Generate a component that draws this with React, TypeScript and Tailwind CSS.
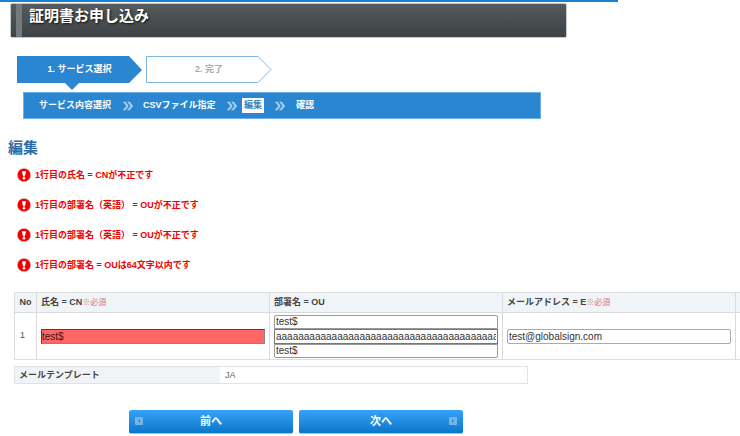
const Err = ({ children }: { children: React.ReactNode }) => (
  <div className="flex h-[30px] items-center gap-[4px] pl-[17px]">
    <svg width="14" height="14" viewBox="0 0 14 14" className="shrink-0">
      <circle cx="7" cy="7" r="6.6" fill="#f00000" />
      <circle cx="7" cy="7" r="6.6" fill="none" stroke="#e8a0a0" strokeWidth="0.6" />
      <path d="M4.9 3.2h4.2L7.9 8.4H6.1z" fill="#fff" />
      <circle cx="7" cy="10.3" r="1.3" fill="#fff" />
    </svg>
    <span className="text-[9px] font-bold leading-none text-[#f00000]">{children}</span>
  </div>
);
const Chevrons = ({ className }: { className: string }) => (
  <svg width="12" height="10" viewBox="0 0 14 10" className={"shrink-0 " + className}>
    <path d="M1 0l4 5-4 5h3l4-5-4-5zM6 0l4 5-4 5h3l4-5-4-5z" fill="#a9cdec" />
  </svg>
);
const Req = () => <span className="text-[8px] font-normal text-[#d9717c]">※必須</span>;
const inputBase = "block text-[10px] leading-none outline-none";
const App = () => (
  <div className="relative h-[436px] w-[740px] overflow-hidden bg-white font-['Liberation_Sans','Noto_Sans_CJK_JP',sans-serif]">
    <div className="h-[2px] w-[618px] bg-[#1a80d2]" />
    <div className="ml-[10px] mt-[1px] flex h-[35px] w-[557px] rounded-[2px] border border-[#c4c8ca] bg-gradient-to-b from-[#555b5e] to-[#3e4244]">
      <div className="ml-[5px] h-full w-[6px] bg-[#737a7e]" />
      <h1 className="ml-[7px] mt-[1px] text-[15px] font-bold leading-[22px] text-white [text-shadow:1px_1px_2px_#111]">証明書お申し込み</h1>
    </div>
    <div className="ml-[17px] mt-[18px] flex h-[27px] gap-[4px]">
      <div className="relative flex h-[27px] w-[125px] items-center justify-center">
        <svg width="125" height="34" viewBox="0 0 125 34" className="absolute left-0 top-0">
          <path d="M0 0H112L125 14 112 27H62L55 34 48 27H0z" fill="#2a86d0" />
        </svg>
        <span className="relative text-[9px] font-bold leading-none text-white">1. サービス選択</span>
      </div>
      <div className="relative flex h-[27px] w-[126px] items-center justify-center">
        <svg width="126" height="27" viewBox="0 0 126 27" className="absolute left-0 top-0">
          <path d="M.5.5H112L125 13.5 112 26.5H.5z" fill="#fff" stroke="#7fb6e6" />
        </svg>
        <span className="relative text-[9px] font-bold leading-none text-[#aaa]">2. 完了</span>
      </div>
    </div>
    <div className="ml-[23px] mt-[9px] flex h-[27px] w-[518px] items-center border border-[#6db0e6] bg-[#2a86d0] pl-[15px] text-[9px] font-bold leading-none text-white">
      <span>サービス内容選択</span>
      <Chevrons className="ml-[11px] mr-[9px]" />
      <span className="w-[73px] whitespace-nowrap">CSVファイル指定</span>
      <Chevrons className="ml-[10px] mr-[4px]" />
      <span className="bg-white px-[2px] py-[3px] text-[#3f7fb8]">編集</span>
      <Chevrons className="ml-[10px] mr-[10px]" />
      <span>確認</span>
    </div>
    <h2 className="ml-[8px] mt-[19px] text-[15px] font-bold leading-[20px] text-[#2d6aa8]">編集</h2>
    <div className="mt-[2px]">
      <Err>1行目の氏名 = CNが不正です</Err>
      <Err>1行目の部署名（英語） = OUが不正です</Err>
      <Err>1行目の部署名（英語） = OUが不正です</Err>
      <Err>1行目の部署名 = OUは64文字以内です</Err>
    </div>
    <div className="ml-[14px] mt-[12px] w-[740px] border-y border-l border-[#dcdfe1]">
      <div className="flex h-[20px] border-b border-[#d8dadc] bg-[#f0f4f7] text-[9px] font-bold leading-none text-[#444]">
        <div className="flex w-[22px] items-center justify-center border-r border-[#d8dadc]">No</div>
        <div className="flex w-[233px] items-center border-r border-[#d8dadc] pl-[4px]">氏名 = CN<Req /></div>
        <div className="flex w-[233px] items-center border-r border-[#d8dadc] pl-[4px]">部署名 = OU</div>
        <div className="flex w-[233px] items-center border-r border-[#d8dadc] pl-[4px]">メールアドレス = E<Req /></div>
      </div>
      <div className="flex h-[46px] text-[9px] text-[#555]">
        <div className="flex w-[22px] items-center border-r border-[#d8dadc] pl-[5px]">1</div>
        <div className="flex w-[233px] items-center border-r border-[#d8dadc] pl-[4px]">
          <input readOnly value="test$" className={inputBase + " h-[15px] w-[224px] border border-[#444] border-b-[#888] border-r-[#888] bg-[#ff6666] text-[#3a1818]"} />
        </div>
        <div className="flex w-[233px] flex-col justify-center border-r border-[#d8dadc] pl-[4px]">
          <input readOnly value="test$" className={inputBase + " h-[14px] w-[224px] rounded-t-[2px] border border-[#999] bg-white px-[1px] text-[#333]"} />
          <input readOnly value="aaaaaaaaaaaaaaaaaaaaaaaaaaaaaaaaaaaaaaaaaaaaaaaaaaaaaaaaaaaaaa" className={inputBase + " h-[15px] w-[224px] border border-[#777] bg-white px-[1px] text-[#333]"} />
          <input readOnly value="test$" className={inputBase + " h-[14px] w-[224px] rounded-b-[2px] border border-[#999] bg-white px-[1px] text-[#333]"} />
        </div>
        <div className="flex w-[233px] items-center border-r border-[#d8dadc] pl-[4px]">
          <input readOnly value="test@globalsign.com" className={inputBase + " h-[15px] w-[224px] rounded-[2px] border border-[#aaa] bg-white px-[1px] text-[#333]"} />
        </div>
      </div>
    </div>
    <div className="ml-[14px] mt-[6px] flex h-[18px] w-[514px] border border-[#e0e2e4] text-[9px] leading-none">
      <div className="flex w-[205px] items-center bg-[#f0f4f7] pl-[4px] font-bold text-[#444]">メールテンプレート</div>
      <div className="flex items-center pl-[5px] text-[#666]">JA</div>
    </div>
    <div className="ml-[129px] mt-[26px] flex gap-[6px]">
      {[
        { label: "前へ", left: true },
        { label: "次へ", left: false },
      ].map((b) => (
        <button key={b.label} className="relative flex h-[24px] w-[164px] items-center justify-center rounded-[2px] border-b border-[#9cc6e6] bg-gradient-to-b from-[#35a2fb] to-[#0677c8] text-[11px] font-bold leading-none text-white">
          <span className={"absolute top-[7px] flex h-[8px] w-[8px] items-center justify-center rounded-[1px] bg-[#74b6e6] " + (b.left ? "left-[6px]" : "right-[6px]")}>
            <svg width="4" height="4" viewBox="0 0 4 4">
              <path d={b.left ? "M3 0v4L1 2z" : "M1 0v4l2-2z"} fill="#2a86d0" />
            </svg>
          </span>
          {b.label}
        </button>
      ))}
    </div>
  </div>
);
export default App;
